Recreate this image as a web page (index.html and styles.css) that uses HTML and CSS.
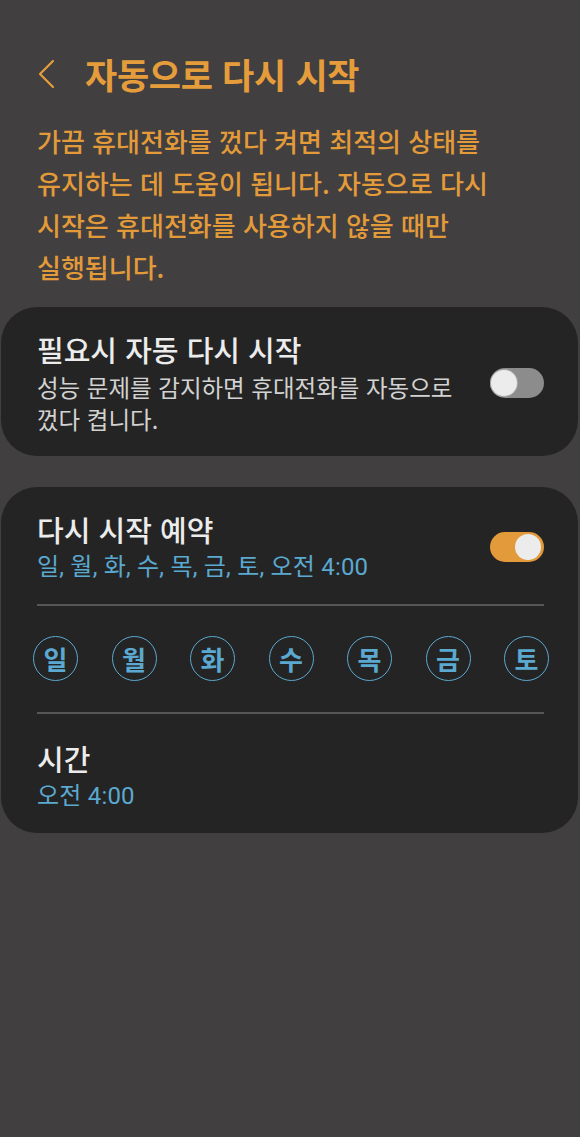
FILE: index.html
```html
<!DOCTYPE html>
<html lang="ko">
<head>
<meta charset="utf-8">
<title>자동으로 다시 시작</title>
<link rel="stylesheet" href="styles.css">
</head>
<body>
<div class="page">
  <header class="header">
    <svg class="back" width="20" height="32" viewBox="0 0 20 32"><polyline points="16,3 3,16 16,29" fill="none" stroke="#e59d3b" stroke-width="2.2" stroke-linecap="round" stroke-linejoin="round"/></svg>
    <h1 class="title">자동으로 다시 시작</h1>
  </header>
  <p class="desc">가끔 휴대전화를 껐다 켜면 최적의 상태를<br>유지하는 데 도움이 됩니다. 자동으로 다시<br>시작은 휴대전화를 사용하지 않을 때만<br>실행됩니다.</p>

  <section class="card card-auto">
    <div class="row">
      <div class="text">
        <div class="item-title">필요시 자동 다시 시작</div>
        <div class="item-sub">성능 문제를 감지하면 휴대전화를 자동으로<br>껐다 켭니다.</div>
      </div>
      <div class="switch off"><span class="knob"></span></div>
    </div>
  </section>

  <section class="card card-sched">
    <div class="row">
      <div class="text">
        <div class="item-title">다시 시작 예약</div>
        <div class="item-sub blue">일, 월, 화, 수, 목, 금, 토, 오전 4:00</div>
      </div>
      <div class="switch on"><span class="knob"></span></div>
    </div>
    <div class="divider"></div>
    <div class="days">
      <span class="day">일</span>
      <span class="day">월</span>
      <span class="day">화</span>
      <span class="day">수</span>
      <span class="day">목</span>
      <span class="day">금</span>
      <span class="day">토</span>
    </div>
    <div class="divider"></div>
    <div class="time">
      <div class="item-title">시간</div>
      <div class="item-sub blue">오전 4:00</div>
    </div>
  </section>
</div>
</body>
</html>
```

FILE: styles.css
```css
html, body {
  margin: 0;
  padding: 0;
  background: #413f40;
}
body {
  font-family: "Noto Sans CJK KR", "Noto Sans", sans-serif;
  width: 580px;
  min-height: 1137px;
}
.page {
  padding: 52px 2px 0 1px;
}
.header {
  display: flex;
  align-items: center;
  height: 44px;
  padding-left: 36px;
}
.back {
  display: block;
  margin-right: 28px;
}
.title {
  margin: 0;
  font-size: 35px;
  font-weight: 700;
  color: #e59d3b;
  line-height: 44px;
  letter-spacing: -0.3px;
}
.desc {
  margin: 24px 0 19px 36px;
  font-size: 26px;
  font-weight: 500;
  line-height: 42px;
  color: #e39b3a;
  letter-spacing: 0;
  white-space: nowrap;
}
.card {
  background: #242424;
  border-radius: 36px;
  padding: 24px 34px 21px 36px;
}
.card + .card {
  margin-top: 31px;
}
.card-sched {
  padding-bottom: 21px;
}
.row {
  display: flex;
  align-items: center;
  justify-content: space-between;
}
.item-title {
  font-size: 29px;
  font-weight: 500;
  line-height: 36px;
  color: #ececec;
}
.item-sub {
  margin-top: 4px;
  font-size: 23.5px;
  line-height: 32px;
  color: #d2d2d2;
  white-space: nowrap;
}
.item-sub.blue {
  font-family: Roboto, "Noto Sans CJK KR", sans-serif;
  color: #5ba9d0;
  font-size: 24px;
  font-weight: 400;
  letter-spacing: 0.2px;
}
.switch {
  position: relative;
  width: 54px;
  height: 30px;
  border-radius: 15px;
  flex: none;
}
.switch.off {
  background: #8c8c8c;
}
.switch.on {
  background: #e39a3a;
}
.knob {
  position: absolute;
  top: 2px;
  width: 26px;
  height: 26px;
  border-radius: 50%;
  background: #ececec;
}
.switch.off .knob {
  left: 1px;
  box-shadow: 0 0 0 1px #a8a8a8;
}
.switch.on .knob {
  right: 3px;
}
.divider {
  height: 2px;
  background: #565656;
  margin-top: 21px;
}
.days {
  display: flex;
  justify-content: space-between;
  margin: 30px -5px 31px -4px;
}
.day {
  width: 43px;
  height: 43px;
  border: 1.6px solid #5ba9d0;
  border-radius: 50%;
  display: flex;
  align-items: center;
  justify-content: center;
  color: #5ba9d0;
  font-size: 26px;
  font-weight: 700;
  line-height: 1;
}
.days + .divider {
  margin-top: 0;
}
.time {
  padding-top: 26px;
}
```
